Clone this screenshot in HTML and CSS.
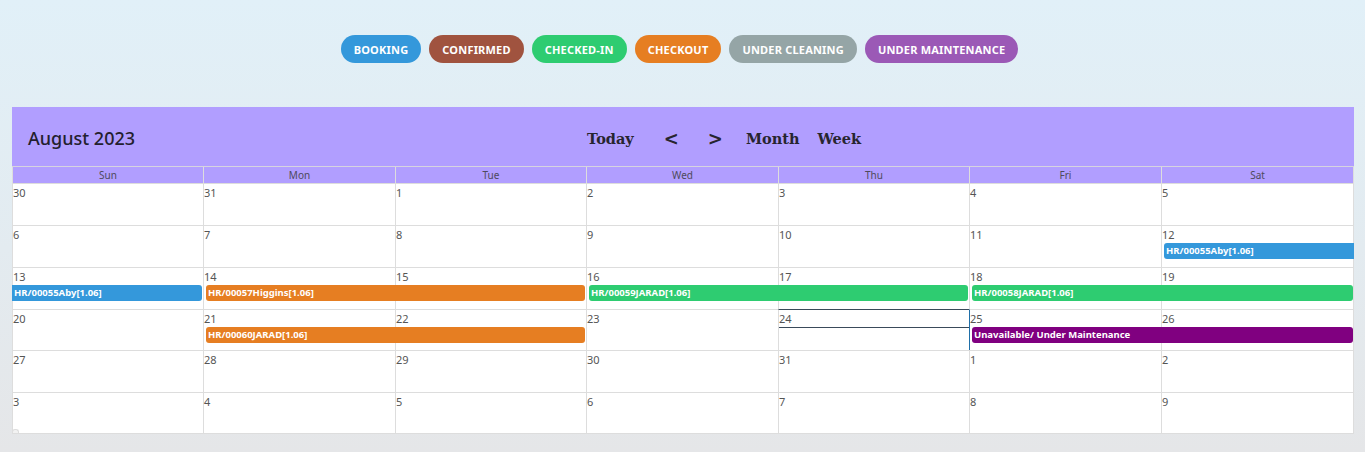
FILE: index.html
```html
<!DOCTYPE html>
<html>
<head>
<meta charset="utf-8">
<link rel="stylesheet" href="styles.css">
</head>
<body>
<div class="legend">
  <span class="pill booking">BOOKING</span>
  <span class="pill confirmed">CONFIRMED</span>
  <span class="pill checkedin">CHECKED-IN</span>
  <span class="pill checkout">CHECKOUT</span>
  <span class="pill cleaning">UNDER CLEANING</span>
  <span class="pill maint">UNDER MAINTENANCE</span>
</div>

<div class="calendar">
  <div class="cal-head">
    <div class="title">August 2023</div>
    <div class="nav">
      <span class="nav-btn today-btn">Today</span>
      <span class="nav-btn prev">&lt;</span>
      <span class="nav-btn next">&gt;</span>
      <span class="nav-btn month">Month</span>
      <span class="nav-btn">Week</span>
    </div>
  </div>
  <div class="dow">
    <div>Sun</div><div>Mon</div><div>Tue</div><div>Wed</div><div>Thu</div><div>Fri</div><div>Sat</div>
  </div>
  <div class="weeks">
    <div class="week">
      <div class="cell c1"><span class="num">30</span></div>
      <div class="cell c2"><span class="num">31</span></div>
      <div class="cell c3"><span class="num">1</span></div>
      <div class="cell c4"><span class="num">2</span></div>
      <div class="cell c5"><span class="num">3</span></div>
      <div class="cell c6"><span class="num">4</span></div>
      <div class="cell c7"><span class="num">5</span></div>
    </div>
    <div class="week">
      <div class="cell c1"><span class="num">6</span></div>
      <div class="cell c2"><span class="num">7</span></div>
      <div class="cell c3"><span class="num">8</span></div>
      <div class="cell c4"><span class="num">9</span></div>
      <div class="cell c5"><span class="num">10</span></div>
      <div class="cell c6"><span class="num">11</span></div>
      <div class="cell c7"><span class="num">12</span></div>
      <div class="ev blue cont-right s7">HR/00055Aby[1.06]</div>
    </div>
    <div class="week">
      <div class="cell c1"><span class="num">13</span></div>
      <div class="cell c2"><span class="num">14</span></div>
      <div class="cell c3"><span class="num">15</span></div>
      <div class="cell c4"><span class="num">16</span></div>
      <div class="cell c5"><span class="num">17</span></div>
      <div class="cell c6"><span class="num">18</span></div>
      <div class="cell c7"><span class="num">19</span></div>
      <div class="ev blue cont-left s1">HR/00055Aby[1.06]</div>
      <div class="ev orange s2">HR/00057Higgins[1.06]</div>
      <div class="ev green s4">HR/00059JARAD[1.06]</div>
      <div class="ev green s6">HR/00058JARAD[1.06]</div>
    </div>
    <div class="week">
      <div class="cell c1"><span class="num">20</span></div>
      <div class="cell c2"><span class="num">21</span></div>
      <div class="cell c3"><span class="num">22</span></div>
      <div class="cell c4"><span class="num">23</span></div>
      <div class="cell c5 is-today"><span class="num">24</span></div>
      <div class="cell c6 after-today"><span class="num">25</span></div>
      <div class="cell c7"><span class="num">26</span></div>
      <div class="ev orange s2">HR/00060JARAD[1.06]</div>
      <div class="ev purple s6">Unavailable/ Under Maintenance</div>
    </div>
    <div class="week">
      <div class="cell c1"><span class="num">27</span></div>
      <div class="cell c2"><span class="num">28</span></div>
      <div class="cell c3"><span class="num">29</span></div>
      <div class="cell c4"><span class="num">30</span></div>
      <div class="cell c5"><span class="num">31</span></div>
      <div class="cell c6"><span class="num">1</span></div>
      <div class="cell c7"><span class="num">2</span></div>
    </div>
    <div class="week">
      <div class="cell c1"><span class="num">3</span></div>
      <div class="cell c2"><span class="num">4</span></div>
      <div class="cell c3"><span class="num">5</span></div>
      <div class="cell c4"><span class="num">6</span></div>
      <div class="cell c5"><span class="num">7</span></div>
      <div class="cell c6"><span class="num">8</span></div>
      <div class="cell c7"><span class="num">9</span></div>
    </div>
  </div>
  <div class="corner"></div>
</div>
</body>
</html>
```

FILE: styles.css
```css
* { box-sizing: border-box; }
html, body { margin: 0; height: 100%; }
body {
  background: linear-gradient(to bottom, #e1f0f8 0%, #e3ebf0 55%, #e5e6e8 100%);
  font-family: "Noto Sans", "DejaVu Sans", sans-serif;
  padding: 35px 11px 0 12px;
  overflow: hidden;
}
.legend {
  display: flex;
  justify-content: center;
  gap: 8px;
  padding-right: 7px;
}
.pill {
  display: inline-flex;
  align-items: center;
  height: 28px;
  padding: 0 13px;
  border-radius: 14px;
  color: #fff;
  font-size: 11px;
  font-weight: 700;
  letter-spacing: 0.2px;
}
.booking { background: #3498db; }
.confirmed { background: #a0533f; }
.checkedin { background: #2ecc71; }
.checkout { background: #e67e22; }
.cleaning { background: #95a5a6; }
.maint { background: #9b59b6; }

.calendar {
  margin-top: 44px;
  width: 1342px;
  position: relative;
}
.cal-head {
  background: #b19eff;
  height: 59px;
  display: flex;
  align-items: center;
  padding-left: 16px;
}
.title {
  flex: 0 0 559px;
  font-size: 18px;
  font-weight: 500;
  color: #23202e;
  padding-top: 2px;
}
.nav {
  display: flex;
  align-items: center;
  font-family: "DejaVu Serif", serif;
  font-weight: 700;
  font-size: 14.5px;
  color: #27252f;
  padding-top: 3px;
}
.nav-btn { display: inline-block; }
.today-btn { margin-right: 30px; }
.prev, .next { font-size: 18px; }
.prev { margin-right: 29px; }
.next { margin-right: 23px; }
.month { margin-right: 18px; }

.dow, .week {
  display: grid;
  grid-template-columns: 191px 192px 191px 192px 191px 192px 193px;
}
.dow {
  background: #b19eff;
  border-top: 1px solid #d6d4e0;
}
.dow div {
  height: 16px;
  font-size: 10px;
  line-height: 16px;
  text-align: center;
  color: #4e4a5c;
  border-left: 1px solid #ddd;
}
.dow div:last-child { border-right: 1px solid #ddd; }

.weeks {
  display: grid;
  grid-template-rows: 42px 42px 42px 41px 42px 41px;
  background: #fff;
  border-bottom: 1px solid #ddd;
}
.week {
  grid-template-rows: 18px 16px 1fr;
}
.cell {
  grid-row: 1 / -1;
  border-left: 1px solid #ddd;
  border-top: 1px solid #ddd;
  background: #fff;
}
.cell.c7 { border-right: 1px solid #ddd; }
.c1 { grid-column: 1; }
.c2 { grid-column: 2; }
.c3 { grid-column: 3; }
.c4 { grid-column: 4; }
.c5 { grid-column: 5; }
.c6 { grid-column: 6; }
.c7 { grid-column: 7; }
.num {
  display: block;
  font-size: 11px;
  line-height: 16px;
  padding-top: 1px;
  color: #555;
}
.is-today { border-top-color: #3a4a5a; }
.is-today .num { border-bottom: 1px solid #3a4a5a; }
.after-today { border-left-color: #1f6fa8; }

.ev {
  grid-row: 2;
  height: 16px;
  margin: 0 1px 0 3px;
  border-radius: 3px;
  color: #fff;
  font-size: 9.5px;
  font-weight: 700;
  line-height: 16px;
  padding-left: 2px;
  white-space: nowrap;
  overflow: hidden;
  position: relative;
  z-index: 1;
}
.s1 { grid-column: 1 / span 1; }
.s2 { grid-column: 2 / span 2; }
.s4 { grid-column: 4 / span 2; }
.s6 { grid-column: 6 / span 2; }
.s7 { grid-column: 7 / span 1; }
.cont-left { margin-left: 0; border-top-left-radius: 0; border-bottom-left-radius: 0; }
.cont-right { margin-right: 0; border-top-right-radius: 0; border-bottom-right-radius: 0; }
.blue { background: #3498db; }
.orange { background: #e67e22; }
.green { background: #2ecc71; }
.purple { background: #800080; }

.corner {
  position: absolute;
  left: 0;
  bottom: 1px;
  width: 7px;
  height: 4px;
  border: 1px solid #ddd;
  border-bottom: none;
  border-radius: 3px 3px 0 0;
  background: #f2f2f2;
}
```
